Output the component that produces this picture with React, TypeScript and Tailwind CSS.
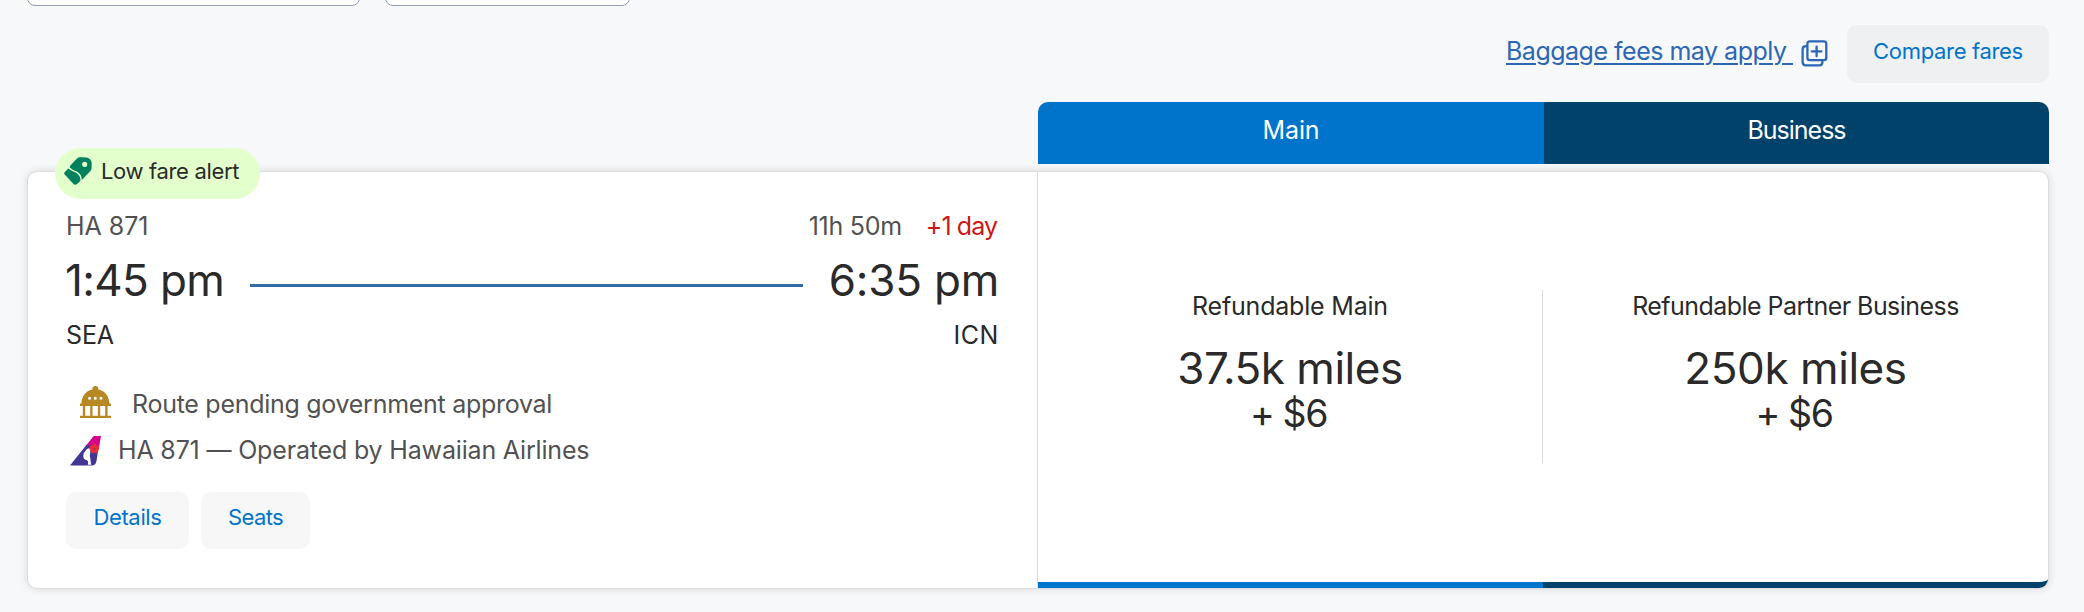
import { clsx } from 'clsx';

const fares = [
  {
    cabin: 'Main',
    name: 'Refundable Main',
    miles: '37.5k miles',
    headerClass: 'w-[506px] rounded-tl-[10px] bg-[#0074ca]',
    cabinClass: 'tracking-[-0.1px]',
    nameClass: 'tracking-[-0.2px]',
    milesClass: 'tracking-[-0.47px]',
    barClass: 'border-[#0074ca]',
  },
  {
    cabin: 'Business',
    name: 'Refundable Partner Business',
    miles: '250k miles',
    headerClass: 'w-[505px] rounded-tr-[10px] bg-[#00426a]',
    cabinClass: 'tracking-[-1px]',
    nameClass: 'tracking-[-0.54px]',
    milesClass: 'tracking-[-0.43px]',
    barClass: 'border-[#00426a] rounded-br-[9px]',
  },
];

function CopyPlusIcon() {
  return (
    <svg width="27" height="27" viewBox="0 0 27 27" fill="none" stroke="#2c66b4" strokeWidth="2.3" strokeLinecap="round">
      <rect x="6.4" y="1.4" width="18.9" height="18.7" rx="2.4" />
      <path d="M5.2 6.2C3 6.2 1.6 7.4 1.6 9.4V22c0 2 1.2 3.3 3.2 3.3H18c2.2 0 3.4-1.3 3.4-3.4" />
      <path d="M15.6 6.6v9.6M10.8 11.4h9.6" />
    </svg>
  );
}

function TagIcon() {
  return (
    <svg width="28" height="28" viewBox="0 0 28 28" fill="#00805d">
      <path
        fillRule="evenodd"
        d="M5.8 10.4Q5.6 9.2 6.6 8.2L13 1.6Q14.4.3 16.2.3L22.4.5Q27.7 1.5 27.7 6.5L27.5 11.5Q27.3 13 26.2 14.2L17.8 23Q17.8 16.7 12.7 14.4Q7.8 12.6 5.8 10.4ZM20.7 4.7a2.6 2.6 0 1 0 0 5.2a2.6 2.6 0 1 0 0-5.2Z"
      />
      <path d="M4.4 11.6L.6 15.2Q-.3 16.4.7 17.6L9.5 27Q11.3 28.6 13 27L15.6 24.8Q16.7 23.8 16.4 22Q15.7 17.6 11.6 15.5Q6.9 13.8 4.4 11.6Z" />
    </svg>
  );
}

function CapitolIcon() {
  return (
    <svg width="31" height="32" viewBox="0 0 31 32" fill="#b78823">
      <circle cx="15.3" cy="3" r="3" />
      <path
        fillRule="evenodd"
        d="M1.4 17.6C1.8 8.8 7 3.2 15.4 3.2S29 8.8 29.4 17.6H31v2.4H0v-2.4ZM9.6 10.7a1.55 1.55 0 1 0 0 3.1a1.55 1.55 0 1 0 0-3.1ZM15.3 10.7a1.55 1.55 0 1 0 0 3.1a1.55 1.55 0 1 0 0-3.1ZM21 10.7a1.55 1.55 0 1 0 0 3.1a1.55 1.55 0 1 0 0-3.1Z"
      />
      <path d="M2.8 19.8h2.4v10H2.8zM10.2 19.8h2.3v10h-2.3zM17.9 19.8h2.3v10h-2.3zM25.2 19.8h2.4v10h-2.4zM0 29.7h31V32H0z" />
    </svg>
  );
}

function HawaiianTailIcon() {
  return (
    <svg width="32" height="30" viewBox="0 0 32 30">
      <path d="M0 29.6L16.6 8.8L29 9L26.6 24.4Q25.8 29.6 21.4 29.6Z" fill="#413691" />
      <path d="M23 .8Q23.7 0 24.8 0H31L29.2 10.5L24 9.5Q20 8 15.6 10.2Z" fill="#d6008b" />
      {/* profile with long hair */}
      <path
        d="M19.6 12Q16.2 12.6 15.6 14.8L13.4 17.6Q14 18.4 13.2 20L13.8 22.6Q14.6 24 17 24.2Q18.8 25.4 17.8 28.8H21.2Q20.4 25 20.4 22.4Q19.2 19.8 20.2 17.4Q20.8 14 19.6 12Z"
        fill="#fff"
      />
      <g fill="#ee2d3b">
        <circle cx="24.3" cy="9.9" r="2.3" />
        <circle cx="27" cy="11.9" r="2.3" />
        <circle cx="26" cy="15" r="2.3" />
        <circle cx="22.7" cy="15" r="2.3" />
        <circle cx="21.6" cy="11.9" r="2.3" />
      </g>
      <circle cx="24.2" cy="12.8" r="1.1" fill="#a52a4a" />
    </svg>
  );
}

export default function App() {
  return (
    <div className="h-[612px] w-[2084px] overflow-hidden bg-[#f7f8fa] pl-[27px] font-['Inter',sans-serif] text-[25px] leading-8 text-[#2a2a2a]">
      {/* bottom edge of the filter row */}
      <div className="flex h-[6px] items-end gap-[25px] overflow-hidden">
        <div className="h-10 w-[333px] shrink-0 rounded-lg border border-[#929db3] bg-white" />
        <div className="h-10 w-[245px] shrink-0 rounded-lg border border-[#929db3] bg-white" />
      </div>

      <div className="mt-[19px] flex h-[58px] w-[2022px] justify-end">
        <a
          href="#"
          className="mt-[10px] whitespace-pre text-[#2c66b4] underline decoration-2 underline-offset-[3px] tracking-[-0.5px]"
        >
          {'Baggage fees may apply '}
        </a>
        <span className="ml-[8px] mr-[19px] mt-[15px]">
          <CopyPlusIcon />
        </span>
        <button className="flex w-[202px] justify-center rounded-[10px] bg-[#eef0f2] pt-[14px] text-[22px] leading-6 tracking-[-0.32px] text-[#0074ca]">
          Compare fares
        </button>
      </div>

      <div className="mt-[19px] flex h-[62px] w-[2022px] justify-end text-white">
        {fares.map((fare) => (
          <div key={fare.cabin} className={clsx('pt-3 text-center', fare.headerClass, fare.cabinClass)}>
            {fare.cabin}
          </div>
        ))}
      </div>

      <div className="relative mt-[7px] flex h-[418px] w-[2022px] rounded-[10px] border border-[#dcdcdc] bg-white shadow-[0_0_8px_rgba(0,0,0,0.13)]">
        <div className="absolute -top-6 left-[27px] flex h-[51px] w-[205px] rounded-[26px] bg-[#e3ffcc] pl-[9px] pt-[9px]">
          <TagIcon />
          <span className="ml-[9px] mt-[2px] whitespace-nowrap text-[22px] leading-6 tracking-[-0.34px]">Low fare alert</span>
        </div>

        <div className="flex w-[1010px] flex-col border-r border-[#dcdcdc] pl-[38px] pr-[38px] pt-[38px]">
          <div className="flex text-[#525252]">
            <span className="flex-1 tracking-[-0.05px]">HA 871</span>
            <span className="tracking-[-0.27px]">11h 50m</span>
            <span className="ml-[24px] mr-[2px] tracking-[-0.94px] text-[#cc1816]">+1 day</span>
          </div>
          <div className="mt-[10px] flex h-14 items-center text-[44px] leading-[56px]">
            <span className="-ml-px w-[185px] tracking-[-0.64px]">1:45 pm</span>
            <span className="mt-[11px] h-[3px] w-[553px] bg-[#336aa8]" />
            <span className="flex-1 text-right tracking-[-0.2px]">6:35 pm</span>
          </div>
          <div className="mt-[11px] flex justify-between">
            <span className="tracking-[-0.1px]">SEA</span>
            <span className="tracking-[0.6px]">ICN</span>
          </div>

          <div className="mt-[37px] flex h-8 text-[#525252]">
            <span className="-mt-[2px] ml-[14px] w-[52px]">
              <CapitolIcon />
            </span>
            <span className="tracking-[-0.28px]">Route pending government approval</span>
          </div>
          <div className="mt-[14px] flex h-8 text-[#525252]">
            <span className="ml-[4px] mt-[2px] w-[48px]">
              <HawaiianTailIcon />
            </span>
            <span className="tracking-[-0.17px]">HA 871 — Operated by Hawaiian Airlines</span>
          </div>

          <div className="mt-[26px] flex h-[57px] gap-3 text-[22px] leading-6 text-[#0074ca]">
            <button className="flex w-[123px] justify-center rounded-[10px] bg-[#f7f7f7] pt-[13px] tracking-[-0.34px]">Details</button>
            <button className="flex w-[109px] justify-center rounded-[10px] bg-[#f7f7f7] pt-[13px] tracking-[-0.62px]">Seats</button>
          </div>
        </div>

        {fares.map((fare, i) => (
          <div key={fare.cabin} className={clsx('flex flex-1 flex-col border-b-[6px] pt-[118px]', fare.barClass)}>
            <div className={clsx('h-[173px] text-center', i === 0 && 'border-r border-r-[#dcdcdc]')}>
              <div className={fare.nameClass}>{fare.name}</div>
              <div className={clsx('mt-[22px] text-[44px] leading-[48px]', fare.milesClass)}>{fare.miles}</div>
              <div className="mt-[2px] pr-[3px] text-[37.5px] leading-10 tracking-[-1.4px]">+ $6</div>
            </div>
          </div>
        ))}
      </div>
    </div>
  );
}
